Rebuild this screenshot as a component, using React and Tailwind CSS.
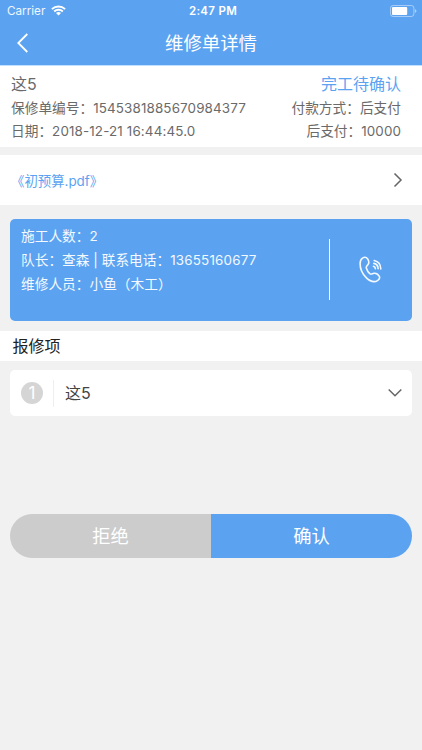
import React from "react";

const Num = ({ children, className = "tracking-[0.14px]" }) => (
  <span className={`text-[13.4px] ${className}`}>{children}</span>
);

const Wifi = () => (
  <svg className="-mt-px" width="15" height="11" viewBox="0 0 15 11" fill="none" stroke="white" strokeWidth="1.9">
    <path d="M0.9 4.1a9.5 9.5 0 0 1 13.2 0" />
    <path d="M3.2 6.5a6.1 6.1 0 0 1 8.6 0" />
    <path d="M7.5 10.6L5 8.1a3.6 3.6 0 0 1 5 0z" fill="white" stroke="none" />
  </svg>
);

const Battery = () => (
  <svg className="-mt-[2px]" width="27" height="12" viewBox="0 0 27 12" fill="none">
    <rect x="0.5" y="0.5" width="23.4" height="11" rx="2.6" stroke="white" strokeOpacity="0.45" />
    <rect x="2" y="2" width="15.2" height="8" rx="1" fill="white" />
    <path d="M25 4.200c1 .3 1.400 1 1.400 1.800s-.4 1.500-1.400 1.800z" fill="white" fillOpacity="0.5" />
  </svg>
);

const Phone = () => (
  <svg width="24" height="28" viewBox="0 0 24 28" fill="none" stroke="#f4f9ff" strokeWidth="1.6" strokeLinecap="round" strokeLinejoin="round">
    <path d="M3.500 2.100C5.200 1 7.400 1.200 8.500 2.700C9.800 4.500 10.200 7 9 8.600C8 9.900 6.900 10.400 7.300 12C7.900 14.200 9.200 16.200 10.800 17.600C12.200 18.700 13.200 17.600 14.800 17.300C16.900 16.900 19.200 18.500 20.200 20.200C21.100 21.800 20.200 23.500 18.500 24.600C15.300 26.600 10.800 25.100 7.200 21.600C3.300 17.800 1.100 12.400 1.100 7.800C1.100 5.300 1.700 3.300 3.500 2.100Z" />
    <path d="M14.500 10.300q2 .6 1.900 2.500M14.900 7.400q4.100.9 4.200 5.400M15.200 4.500q6.400 1.400 6.600 8.400" />
  </svg>
);

export default function App() {
  return (
    <div className="flex h-[750px] w-[422px] flex-col overflow-hidden bg-[#f1f1f1] text-[13.7px] text-[#6a6a6a] [font-family:Inter,'Noto_Sans_CJK_SC',sans-serif]">
      <header className="h-[66px] shrink-0 border-b border-[#bfe0ff] bg-[#5ba3f1] text-white">
        <div className="grid h-[21px] grid-cols-3 items-center pt-[2px] pl-[7px] pr-[5px] text-[11.7px]">
          <div className="flex items-center gap-[6px] text-[#eef6ff]">
            <span>Carrier</span>
            <Wifi />
          </div>
          <div className="pl-[2px] text-center text-[11.500px] font-semibold tracking-[0.3px]">2:47 PM</div>
          <div className="flex justify-end"><Battery /></div>
        </div>
        <div className="grid h-[44px] grid-cols-[60px_1fr_60px] items-center">
          <svg className="ml-[16px]" width="13" height="20" viewBox="0 0 13 20" fill="none" stroke="white" strokeWidth="1.8">
            <path d="M11.300 1L2.300 10l9 9" />
          </svg>
          <h1 className="text-center text-[18.4px] leading-[44px] font-normal">维修单详情</h1>
        </div>
      </header>

      <section className="h-[81px] shrink-0 bg-white pt-[6px] pl-[11px] pr-[21px]">
        <div className="flex h-[24px] items-center justify-between text-[16px]">
          <span>这5</span>
          <span className="text-[#5ba3f1]">完工待确认</span>
        </div>
        <div className="flex h-[24px] items-center justify-between whitespace-nowrap">
          <span>保修单编号：<Num>1545381885670984377</Num></span>
          <span>付款方式：后支付</span>
        </div>
        <div className="flex h-[23px] items-center justify-between whitespace-nowrap">
          <span>日期：<Num>2018-12-21 16:44:45.0</Num></span>
          <span>后支付：<Num className="tracking-[0.1px]">10000</Num></span>
        </div>
      </section>

      <section className="mt-[8px] flex h-[50px] shrink-0 items-center justify-between bg-white pl-[11px] pr-[19px]">
        <span className="pt-[2px] text-[13.400px] text-[#5ba3f1]">《初预算.pdf》</span>
        <svg width="10" height="16" viewBox="0 0 10 16" fill="none" stroke="#666" strokeWidth="1.5">
          <path d="M1.500 1.500L8 8l-6.500 6.500" />
        </svg>
      </section>

      <section className="mx-[10px] mt-[14px] flex h-[102px] shrink-0 rounded-[5px] bg-[#5ba3f1] text-[#f4f9ff]">
        <div className="flex w-[319px] flex-col pt-[5px] pl-[11px] whitespace-nowrap">
          <div className="h-[24px] leading-[24px]">施工人数：<Num>2</Num></div>
          <div className="h-[24px] leading-[24px]">队长：查森 | 联系电话：<Num className="tracking-[0.2px]">13655160677</Num></div>
          <div className="h-[24px] leading-[24px]">维修人员：小鱼（木工）</div>
        </div>
        <div className="mt-[20px] h-[61px] w-px bg-white" />
        <div className="flex flex-1 items-center justify-center">
          <Phone />
        </div>
      </section>

      <h2 className="mt-[10px] h-[30px] shrink-0 bg-white pl-[12.500px] text-[16px] leading-[30px] font-normal text-[#222]">报修项</h2>

      <section className="mx-[10px] mt-[9px] flex h-[46px] shrink-0 items-center rounded-[5px] bg-white pl-[11px] pr-[10px]">
        <div className="flex h-[22px] w-[22px] items-center justify-center rounded-full bg-[#d5d5d5] text-[17px] leading-none text-white">1</div>
        <div className="ml-[10px] h-[27px] w-px bg-[#eeeeee]" />
        <span className="ml-[11px] flex-1 text-[16px] text-[#444]">这5</span>
        <svg width="14" height="10" viewBox="0 0 14 10" fill="none" stroke="#666" strokeWidth="1.5">
          <path d="M.7 1.500L7 7.700l6.300-6.200" />
        </svg>
      </section>

      <div className="mx-[10px] mt-[98px] flex h-[44px] shrink-0 overflow-hidden rounded-full text-[18.3px] text-white">
        <button className="flex-1 bg-[#ccc] pt-[2px] font-normal">拒绝</button>
        <button className="flex-1 bg-[#5ba3f1] pt-[2px] font-normal">确认</button>
      </div>
    </div>
  );
}
